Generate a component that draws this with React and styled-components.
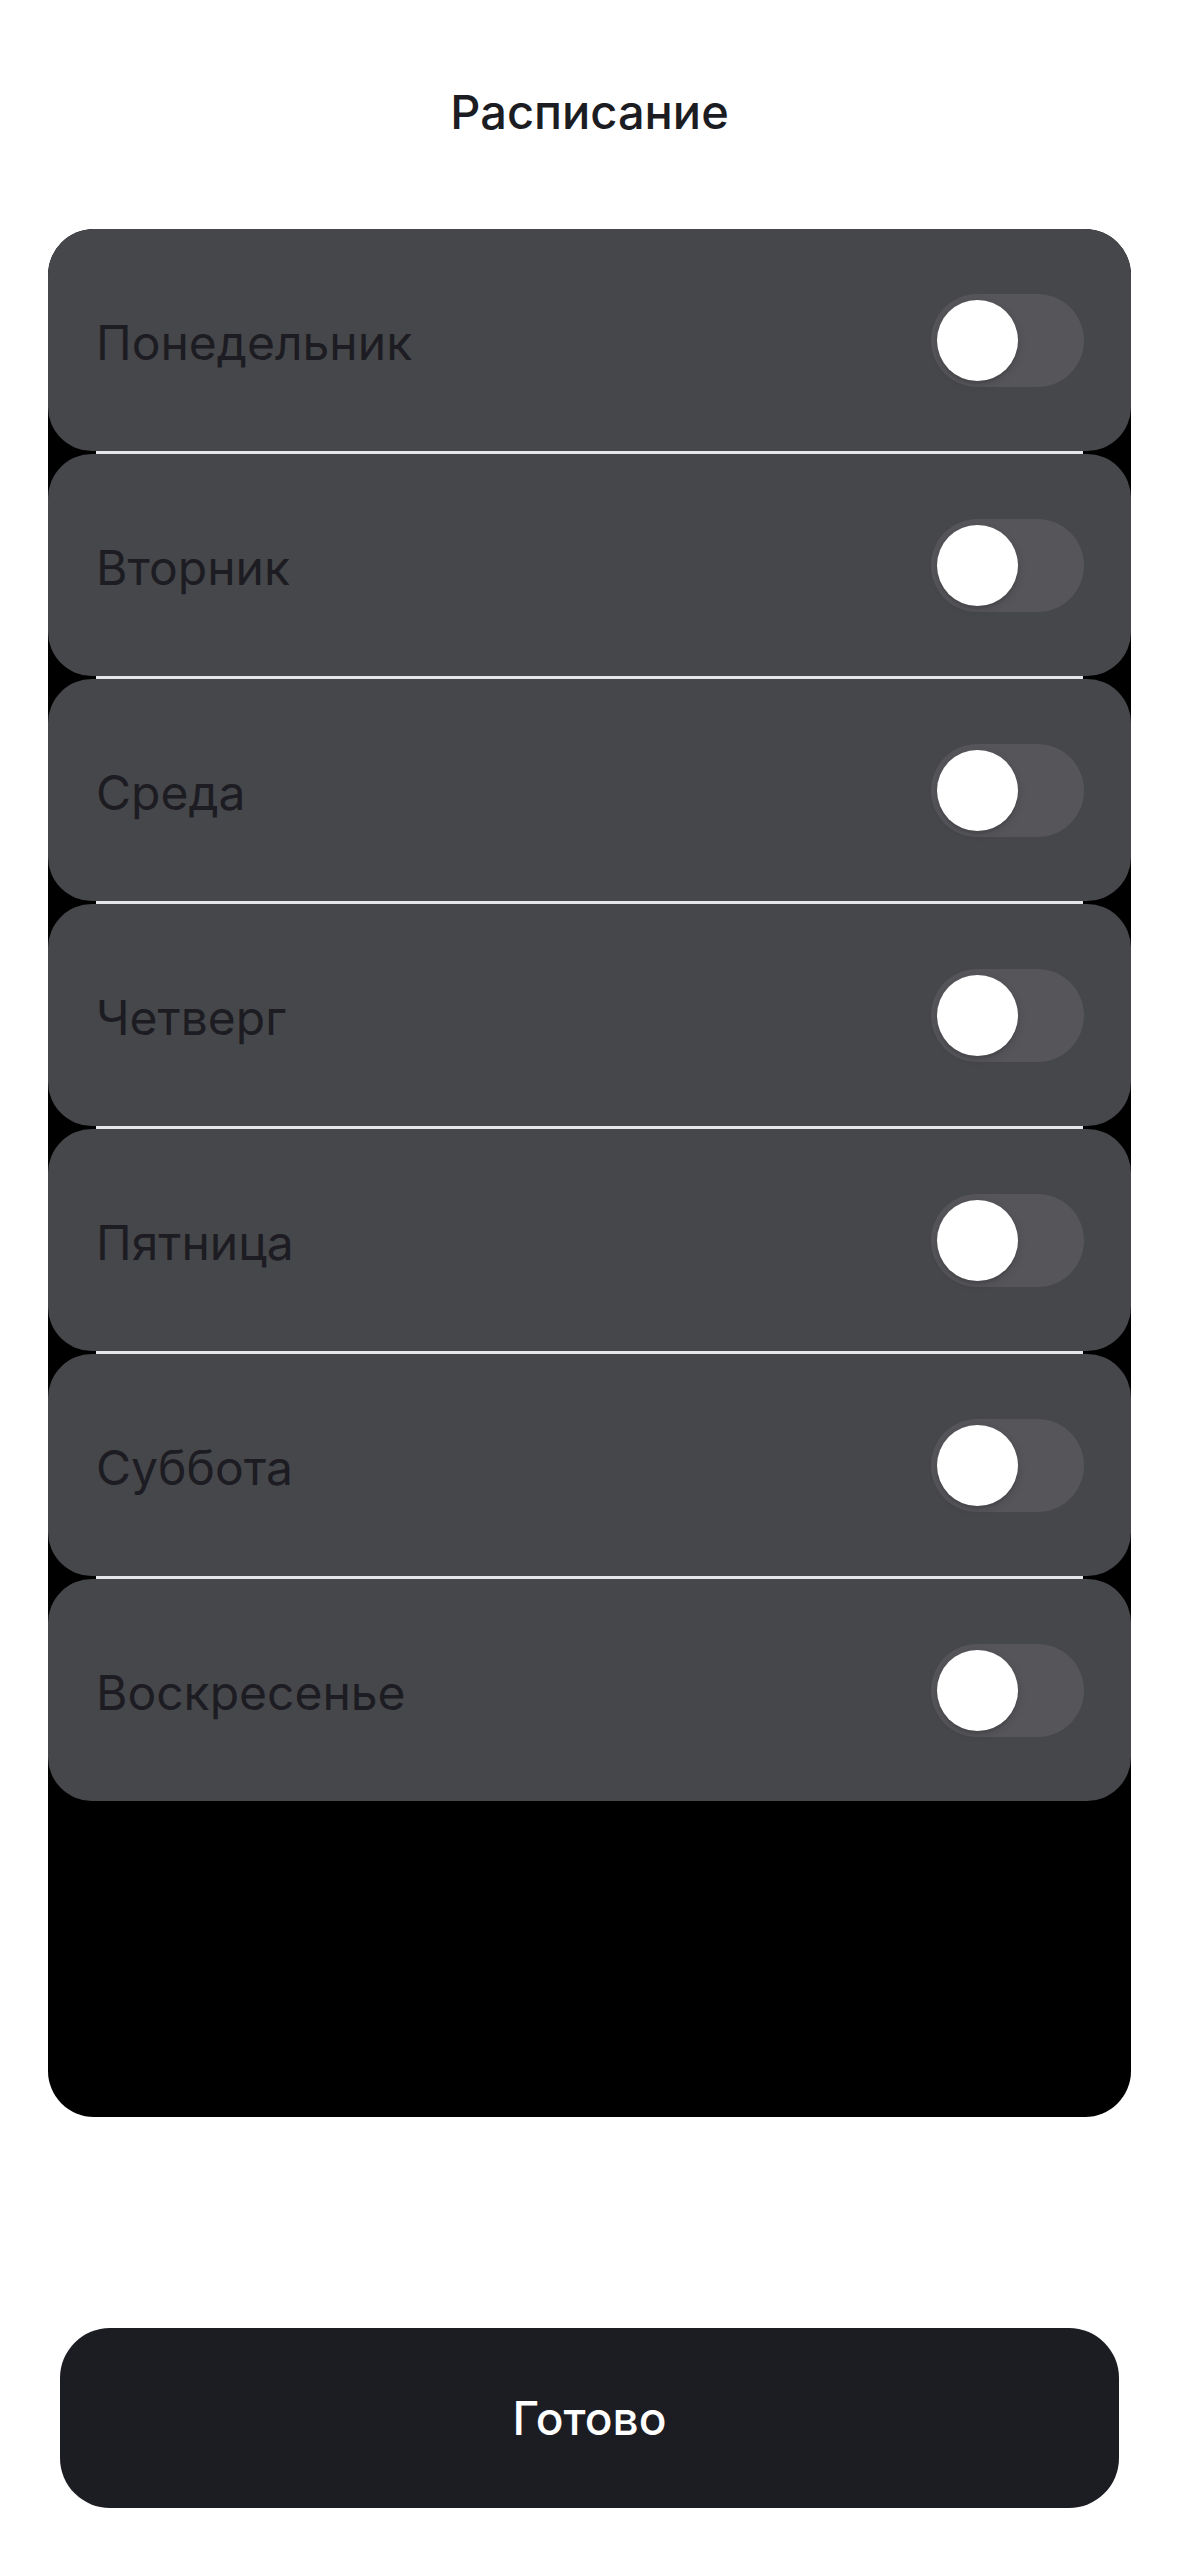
import React, { useState } from "react";
import styled, { createGlobalStyle } from "styled-components";

const DAYS = [
	"Понедельник",
	"Вторник",
	"Среда",
	"Четверг",
	"Пятница",
	"Суббота",
	"Воскресенье"
];

function Toggle({ on, onChange }) {
	return (
		<Track $on={on} onClick={onChange} role="switch" aria-checked={on}>
			<Knob $on={on} />
		</Track>
	);
}

function App() {
	const [active, setActive] = useState(DAYS.map(() => false));

	const toggleDay = (i) => {
		setActive((prev) => prev.map((v, j) => (j === i ? !v : v)));
	};

	return (
		<Page>
			<GlobalStyle />
			<Header>
				<Title>Расписание</Title>
			</Header>
			<Panel>
				{DAYS.map((day, i) => (
					<RowWrap key={day}>
						<Row>
							<DayName>{day}</DayName>
							<Toggle on={active[i]} onChange={() => toggleDay(i)} />
						</Row>
						{i < DAYS.length - 1 && <Separator />}
					</RowWrap>
				))}
			</Panel>
			<Footer>
				<DoneButton>Готово</DoneButton>
			</Footer>
		</Page>
	);
}

export default App;

const GlobalStyle = createGlobalStyle`
	html, body {
		margin: 0;
		padding: 0;
		background: #ffffff;
	}
	body {
		font-family: Inter, Roboto, "Noto Sans", sans-serif;
	}
`;

const Page = styled.div`
	width: 1179px;
	min-height: 2556px;
	box-sizing: border-box;
	padding: 0 48px;
	display: flex;
	flex-direction: column;
`;

const Header = styled.div`
	height: 222px;
	display: flex;
	align-items: center;
	justify-content: center;
`;

const Title = styled.h1`
	margin: 0;
	font-size: 47px;
	font-weight: 500;
	color: #1c1c23;
`;

const Panel = styled.div`
	margin-top: 7px;
	height: 1888px;
	background: #000000;
	border-radius: 46px;
	overflow: hidden;
`;

const RowWrap = styled.div`
	display: flex;
	flex-direction: column;
`;

const Row = styled.div`
	height: 222px;
	box-sizing: border-box;
	padding: 0 47px 0 48px;
	background: #46474a;
	border-radius: 44px;
	display: flex;
	align-items: center;
	justify-content: space-between;
`;

const DayName = styled.span`
	font-size: 48px;
	color: #1c1c22;
	padding-top: 4px;
`;

const Separator = styled.div`
	height: 3px;
	margin: 0 48px;
	background: #e5e5ea;
`;

const Track = styled.div`
	width: 153px;
	height: 93px;
	border-radius: 47px;
	box-sizing: border-box;
	padding: 6px;
	background: ${(p) => (p.$on ? "#34c759" : "#56555a")};
	display: flex;
	justify-content: ${(p) => (p.$on ? "flex-end" : "flex-start")};
	align-items: center;
	cursor: pointer;
`;

const Knob = styled.div`
	width: 81px;
	height: 81px;
	border-radius: 50%;
	background: #ffffff;
	box-shadow: 0 3px 8px rgba(0, 0, 0, 0.15), 0 3px 1px rgba(0, 0, 0, 0.06);
`;

const Footer = styled.div`
	margin-top: 211px;
	padding: 0 12px;
`;

const DoneButton = styled.button`
	width: 100%;
	height: 180px;
	border: none;
	border-radius: 50px;
	background: #1c1c23;
	color: #ffffff;
	font-family: Inter, Roboto, "Noto Sans", sans-serif;
	font-size: 46px;
	font-weight: 500;
	cursor: pointer;
`;
